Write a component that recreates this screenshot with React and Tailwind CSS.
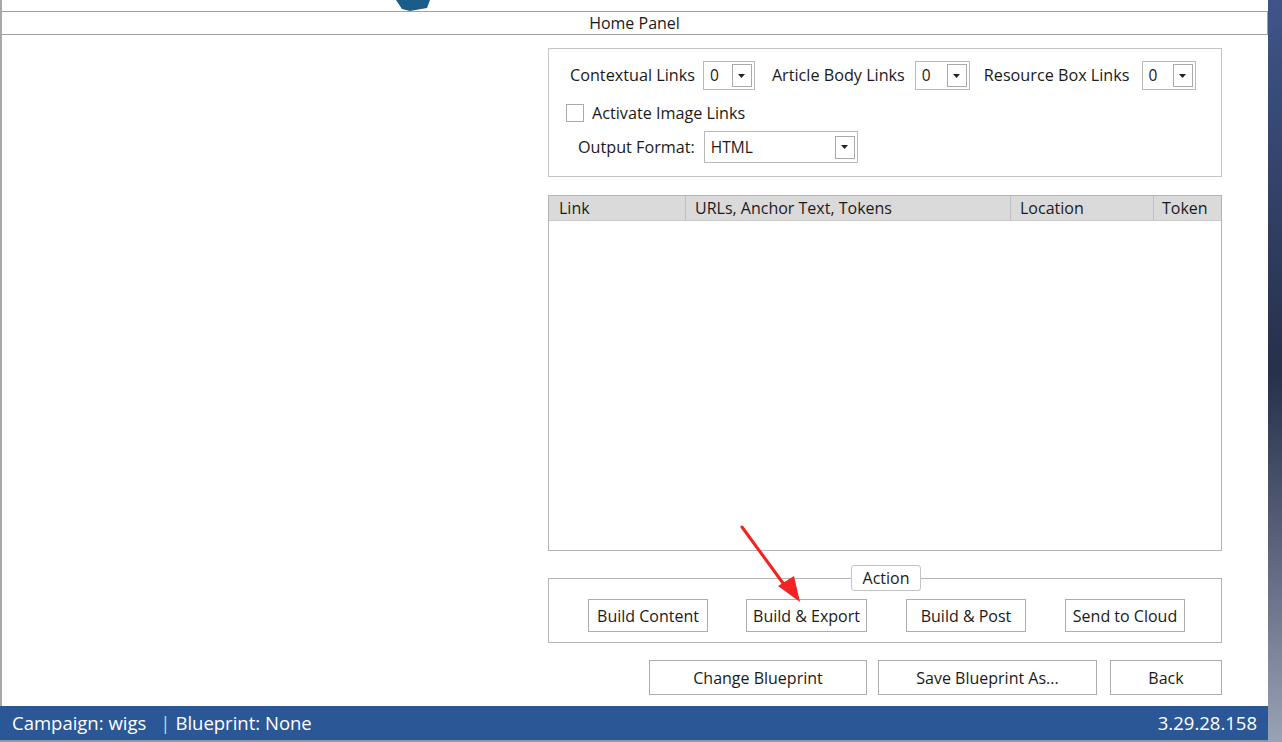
import { useState } from 'react';

const font = { fontFamily: '"Open Sans", "Noto Sans", sans-serif' };

function Combo({ value, width, height = 'h-[29px]' }) {
  return (
    <div className={`flex items-center justify-between border border-[#b9b9b9] bg-white pl-[6px] pr-[2px] ${width} ${height}`}>
      <span className="text-[15.5px] text-[#1a1a1a]">{value}</span>
      <div className="flex h-[23px] w-[20px] items-center justify-center border border-[#a9a9a9] bg-white">
        <svg width="7" height="4" viewBox="0 0 7 4">
          <path d="M0 0h7L3.5 4z" fill="#222" />
        </svg>
      </div>
    </div>
  );
}

function Btn({ children, className }) {
  return (
    <button className={`flex items-center justify-center border border-[#adadad] bg-white text-[16px] text-[#1a1a1a] ${className}`}>
      {children}
    </button>
  );
}

export default function App() {
  const [checked, setChecked] = useState(false);

  return (
    <div className="flex h-[742px] w-[1282px] overflow-hidden bg-white" style={font}>
      <div className="relative flex w-[1268px] flex-col border-l-2 border-[#a8a8a8]">
        {/* logo strip */}
        <div className="h-[12px] border-b border-[#a0a0a0] pl-[394px]">
          <svg width="36" height="11" viewBox="0 0 36 11">
            <path d="M0 0h34l-3 8-17 3-8-2z" fill="#1b5c88" />
          </svg>
        </div>
        <div className="flex h-[23px] items-center justify-center border-b border-r border-[#a0a0a0] text-[16px] leading-none text-[#1a1a1a]">
          Home Panel
        </div>

        <div className="flex flex-1 flex-col pt-[13px]">
          <div className="ml-[546px] flex w-[674px] flex-col">
            {/* link options */}
            <div className="flex h-[129px] flex-col border border-[#c4c4c4] pt-[12px]">
              <div className="flex items-center pl-[21px] text-[16.2px] text-[#1a1a1a]">
                <span className="mr-[8px]">Contextual Links</span>
                <Combo value="0" width="w-[52px]" />
                <span className="ml-[17px] mr-[10px]">Article Body Links</span>
                <Combo value="0" width="w-[55px]" />
                <span className="ml-[14px] mr-[12px]">Resource Box Links</span>
                <Combo value="0" width="w-[54px]" />
              </div>
              <label className="mt-[11px] flex items-center pl-[17px] text-[16.2px] text-[#1a1a1a]">
                <span
                  onClick={() => setChecked(!checked)}
                  className="mr-[8px] flex h-[18px] w-[18px] items-center justify-center border border-[#a9a9a9] bg-white"
                >
                  {checked && <span className="text-[12px]">✓</span>}
                </span>
                Activate Image Links
              </label>
              <div className="mt-[6px] flex items-center pl-[29px] text-[16.2px] text-[#1a1a1a]">
                <span className="mr-[9px]">Output Format:</span>
                <Combo value="HTML" width="w-[154px]" height="h-[32px]" />
              </div>
            </div>

            {/* links table */}
            <div className="mt-[18px] flex h-[356px] flex-col border border-[#b4b4b4]">
              <div className="flex h-[25px] items-center border-b border-[#c8c8c8] bg-[#dadada] text-[16px] text-[#1a1a1a]">
                <div className="flex h-full w-[137px] items-center border-r border-[#c0c0c0] pl-[10px]">Link</div>
                <div className="flex h-full w-[325px] items-center border-r border-[#c0c0c0] pl-[9px]">URLs, Anchor Text, Tokens</div>
                <div className="flex h-full w-[143px] items-center border-r border-[#c0c0c0] pl-[9px]">Location</div>
                <div className="flex h-full flex-1 items-center pl-[8px]">Token</div>
              </div>
              <div className="flex-1 bg-white" />
            </div>

            {/* action group */}
            <div className="relative mt-[27px] flex h-[65px] items-center border border-[#b4b4b4] pl-[39px] pt-[10px]">
              <div className="absolute left-[302px] top-[-14px] flex h-[26px] w-[70px] items-center justify-center rounded-[3px] border border-[#c4c4c4] bg-white text-[16px] text-[#1a1a1a]">
                Action
              </div>
              <Btn className="h-[33px] w-[120px]">Build Content</Btn>
              <Btn className="ml-[38px] h-[33px] w-[121px]">Build &amp; Export</Btn>
              <Btn className="ml-[39px] h-[33px] w-[120px]">Build &amp; Post</Btn>
              <Btn className="ml-[39px] h-[33px] w-[120px]">Send to Cloud</Btn>
            </div>

            {/* bottom buttons */}
            <div className="mt-[17px] flex justify-end gap-[11px]">
              <Btn className="h-[35px] w-[218px]">Change Blueprint</Btn>
              <Btn className="h-[35px] w-[219px]">Save Blueprint As...</Btn>
              <Btn className="ml-[2px] h-[35px] w-[112px]">Back</Btn>
            </div>
          </div>
        </div>

        {/* status bar */}
        <div className="-ml-[2px] mt-[11px] flex h-[34px] items-center justify-between bg-[#2b5797] pl-[12px] pr-[11px] text-[18.5px] text-white">
          <div className="flex items-center">
            <span>Campaign: wigs</span>
            <span className="ml-[14px] text-[#c8d4e8]">|</span>
            <span className="ml-[5px]">Blueprint: None</span>
          </div>
          <span>3.29.28.158</span>
        </div>
        <div className="-ml-[2px] h-[2px] bg-[#8e97a8]" />

        {/* annotation arrow */}
        <svg className="absolute left-[736px] top-[524px]" width="70" height="82" viewBox="0 0 70 82">
          <path d="M4 3 L50 66" stroke="#f42323" strokeWidth="3" strokeLinecap="round" />
          <path d="M40 62 L62 78 L56 52 Z" fill="#f42323" />
        </svg>
      </div>

      {/* desktop background edge */}
      <div className="flex-1 bg-gradient-to-b from-[#3f558a] via-[#27304a] to-[#9aa3b5]" />
    </div>
  );
}
